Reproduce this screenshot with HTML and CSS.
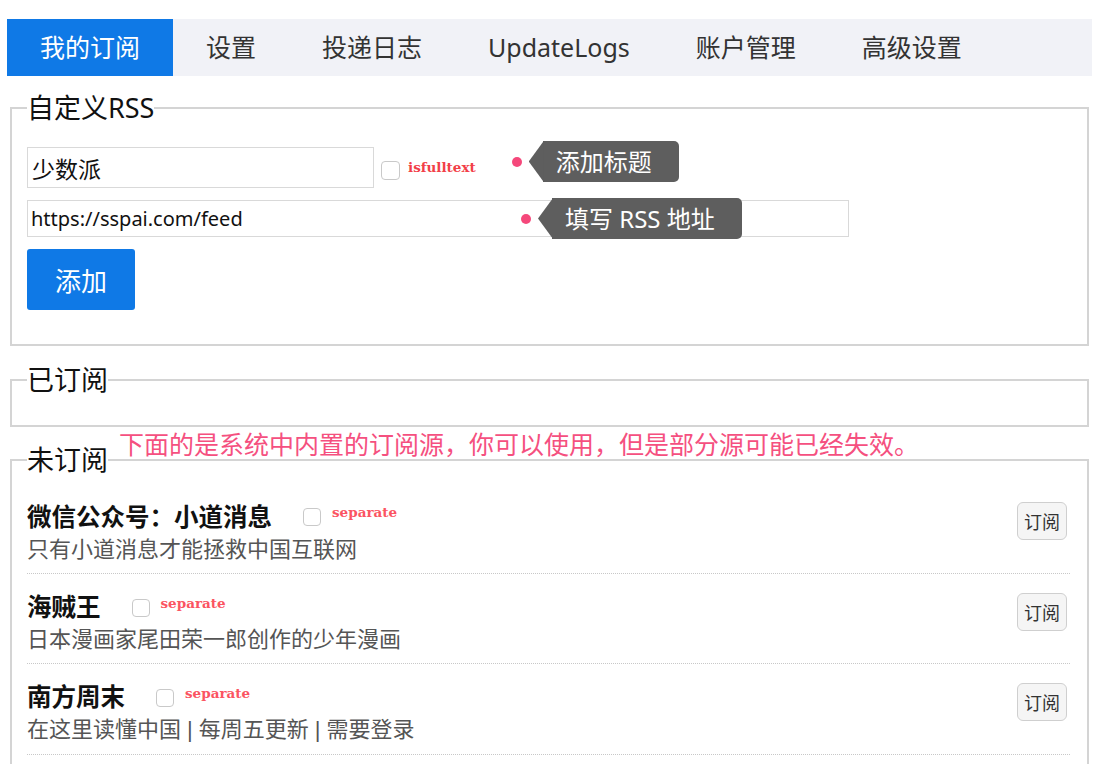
FILE: index.html
```html
<!DOCTYPE html>
<html lang="zh-CN">
<head>
<meta charset="utf-8">
<title>我的订阅</title>
<link rel="stylesheet" href="styles.css">
</head>
<body>
<div class="page">
  <nav class="tabs">
    <a class="tab active" href="#">我的订阅</a>
    <a class="tab" href="#">设置</a>
    <a class="tab" href="#">投递日志</a>
    <a class="tab" href="#">UpdateLogs</a>
    <a class="tab" href="#">账户管理</a>
    <a class="tab" href="#">高级设置</a>
  </nav>

  <fieldset class="box box-custom">
    <legend>自定义RSS</legend>
    <div class="row row-title">
      <input class="field field-title" type="text" value="少数派">
      <input class="check" type="checkbox">
      <span class="flag">isfulltext</span>
      <div class="hint hint-title"><span class="dot"></span><span class="tip">添加标题</span></div>
    </div>
    <div class="url-wrap">
      <input class="field field-url" type="text" value="https://sspai.com/feed">
      <div class="hint hint-url"><span class="dot"></span><span class="tip">填写 RSS 地址</span></div>
    </div>
    <button class="btn-add" type="button">添加</button>
  </fieldset>

  <fieldset class="box box-subscribed">
    <legend>已订阅</legend>
  </fieldset>

  <p class="note">下面的是系统中内置的订阅源，你可以使用，但是部分源可能已经失效。</p>

  <fieldset class="box box-unsub">
    <legend>未订阅</legend>
    <div class="item">
      <div class="item-main">
        <div class="item-head">
          <span class="item-title">微信公众号<span class="colon">：</span>小道消息</span>
          <input class="check check-sep" type="checkbox">
          <span class="flag flag-sep">separate</span>
        </div>
        <div class="item-desc">只有小道消息才能拯救中国互联网</div>
      </div>
      <button class="btn-sub" type="button">订阅</button>
    </div>
    <div class="item">
      <div class="item-main">
        <div class="item-head">
          <span class="item-title">海贼王</span>
          <input class="check check-sep" type="checkbox">
          <span class="flag flag-sep">separate</span>
        </div>
        <div class="item-desc">日本漫画家尾田荣一郎创作的少年漫画</div>
      </div>
      <button class="btn-sub" type="button">订阅</button>
    </div>
    <div class="item">
      <div class="item-main">
        <div class="item-head">
          <span class="item-title">南方周末</span>
          <input class="check check-sep" type="checkbox">
          <span class="flag flag-sep">separate</span>
        </div>
        <div class="item-desc">在这里读懂中国<span class="sep">|</span>每周五更新<span class="sep">|</span>需要登录</div>
      </div>
      <button class="btn-sub" type="button">订阅</button>
    </div>
  </fieldset>
</div>
</body>
</html>
```
FILE: styles.css
```css
html, body {
  margin: 0;
  padding: 0;
  background: #fff;
}

body {
  font-family: "Noto Sans", "Noto Sans CJK SC", sans-serif;
  color: #222;
}

.page {
  width: 1085px;
  margin-left: 7px;
  padding-top: 19px;
}

/* tabs */
.tabs {
  display: flex;
  height: 57px;
  background: #f1f2f7;
}

.tab {
  padding: 0 33px;
  font-size: 25px;
  line-height: 57px;
  color: #333;
  text-decoration: none;
  white-space: nowrap;
}

.tab.active {
  background: #0f79e6;
  color: #fff;
}

/* fieldsets */
.box {
  margin: 0 3px;
  border: 2px solid #d4d4d4;
  padding: 0 17px 0 15px;
  min-width: 0;
}

.box legend {
  padding: 0;
  font-size: 27px;
  line-height: 32px;
  color: #111;
}

.box-custom {
  margin-top: 16px;
  padding-top: 23px;
  padding-bottom: 34px;
}

.box-subscribed {
  margin-top: 18px;
  padding-top: 14px;
  padding-bottom: 15px;
}

.box-unsub {
  margin-top: 0;
  padding-top: 7px;
  padding-bottom: 40px;
}

/* custom rss form */
.row {
  display: flex;
  align-items: flex-start;
}

.row-title {
  margin-bottom: 12px;
}

.field {
  box-sizing: border-box;
  margin: 0;
  border: 1px solid #d9d9d9;
  border-radius: 0;
  background: #fff;
  font-family: "Noto Sans", "Noto Sans CJK SC", sans-serif;
  color: #111;
  outline: none;
}

.field-title {
  width: 347px;
  height: 41px;
  padding: 0 4px;
  font-size: 23px;
}

.field-url {
  width: 822px;
  height: 37px;
  padding: 0 3px;
  font-size: 20px;
}

.check {
  appearance: none;
  -webkit-appearance: none;
  box-sizing: border-box;
  width: 19px;
  height: 19px;
  margin: 14px 0 0 7px;
  border: 1px solid #c9c9c9;
  border-radius: 4px;
  background: #fff;
  flex: none;
}

.flag {
  font-family: "DejaVu Serif", serif;
  font-weight: bold;
  font-size: 13.5px;
  line-height: 16px;
  color: #f23f48;
  margin: 12px 0 0 8px;
  white-space: nowrap;
}

.hint {
  display: flex;
  align-items: center;
}

.hint-title {
  margin: -6px 0 0 36px;
}

.url-wrap {
  position: relative;
  width: 822px;
  height: 37px;
  margin-bottom: 12px;
}

.hint-url {
  position: absolute;
  left: 494px;
  top: -2px;
}

.dot {
  width: 10px;
  height: 10px;
  border-radius: 50%;
  background: #f5487b;
  flex: none;
}

.tip {
  position: relative;
  margin-left: 21px;
  height: 41px;
  padding: 0 27px 0 13px;
  background: #5e5e5e;
  color: #fff;
  font-size: 24px;
  line-height: 41px;
  border-radius: 0 5px 5px 0;
  white-space: nowrap;
}

.tip::before {
  content: "";
  position: absolute;
  left: -14px;
  top: 0;
  width: 15px;
  height: 100%;
  background: #5e5e5e;
  clip-path: polygon(100% 0, 0 50%, 100% 100%);
}

.btn-add {
  display: block;
  width: 108px;
  height: 61px;
  padding: 0;
  border: none;
  border-radius: 3px;
  background: #0f79e6;
  color: #fff;
  font-family: "Noto Sans", "Noto Sans CJK SC", sans-serif;
  font-size: 26px;
}

/* note */
.note {
  margin: 2px 0 -15px 112px;
  font-size: 25px;
  line-height: 30px;
  color: #f5507f;
  white-space: nowrap;
}

/* unsubscribed list */
.item {
  display: flex;
  align-items: flex-start;
  justify-content: space-between;
  padding: 16.5px 0 9.5px;
  border-bottom: 1px dotted #c8c8c8;
}

.item-head {
  display: flex;
  align-items: flex-start;
}

.item-title {
  font-size: 24.5px;
  font-weight: bold;
  line-height: 32px;
  color: #111;
  white-space: nowrap;
}

.colon {
  font-family: "Noto Sans CJK TC", "Noto Sans CJK SC", sans-serif;
}

.check-sep {
  width: 18px;
  height: 18px;
  margin: 8.5px 0 0 31px;
}

.flag-sep {
  margin: 4px 0 0 11px;
  color: #fb5462;
}

.item-desc {
  font-size: 22px;
  line-height: 31px;
  color: #555;
  white-space: nowrap;
}

.sep {
  font-family: "Liberation Sans", sans-serif;
  margin: 0 6px;
}

.btn-sub {
  margin: 2.5px 3px 0 0;
  height: 38px;
  padding: 0 6px;
  border: 1px solid #cfcfcf;
  border-radius: 6px;
  background: #f5f5f5;
  color: #333;
  font-family: "Noto Sans", "Noto Sans CJK SC", sans-serif;
  font-size: 18px;
  flex: none;
}
```
